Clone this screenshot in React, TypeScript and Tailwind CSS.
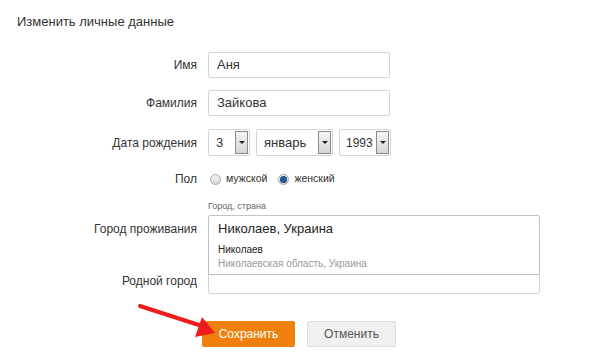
import type { FC, ReactNode } from "react";

const Row: FC<{ label: string; className?: string; children: ReactNode }> = ({ label, className, children }) => (
  <div className={"flex items-center " + (className ?? "")}>
    <div className="w-[198px] shrink-0 pr-[1px] text-right text-[12px] text-[#333]">{label}</div>
    <div className="ml-[10px] flex items-center">{children}</div>
  </div>
);

const Select: FC<{ value: string; width: string; text?: string; pad?: string }> = ({ value, width, text, pad }) => (
  <div className={"flex h-[27px] items-center justify-between rounded-[2px] border border-[#d4d4d4] bg-white pr-[1px] " + (pad ?? "pl-[7px] ") + " " + width}>
    <span className={(text ?? "text-[13px]") + " text-[#333]"}>{value}</span>
    <div className="flex h-[23px] w-[13px] shrink-0 items-center justify-center border border-[#8a8a8a] bg-gradient-to-b from-[#f4f4f4] to-[#d6d6d6]">
      <div className="h-0 w-0 border-x-[3px] border-t-[3px] border-x-transparent border-t-[#222]" />
    </div>
  </div>
);

const Radio: FC<{ checked?: boolean; label: string }> = ({ checked, label }) => (
  <div className="flex items-center gap-[5px]">
    <div className="flex h-[11px] w-[11px] items-center justify-center rounded-full border border-[#a8a8a8] bg-gradient-to-b from-[#f2f2f2] to-[#d8d8d8]">
      {checked && <div className="h-[5px] w-[5px] rounded-full bg-[#1e5fa8] ring-1 ring-[#24456e]" />}
    </div>
    <span className="text-[10.5px] text-[#333]">{label}</span>
  </div>
);

const App: FC = () => {
  return (
    <div className="relative h-[359px] w-[600px] overflow-hidden bg-white font-['Liberation_Sans',Arial,sans-serif]">
      <div className="pl-[17px] pt-[13px] text-[13px] leading-[18px] text-[#333]">Изменить личные данные</div>

      <div className="mt-[21px] flex flex-col">
        <Row label="Имя">
          <div className="flex h-[26px] w-[182px] items-center rounded-[2px] border border-[#d4d4d4] px-[8px] text-[13px] text-[#333]">Аня</div>
        </Row>
        <Row label="Фамилия" className="mt-[12px]">
          <div className="flex h-[26px] w-[182px] items-center rounded-[2px] border border-[#d4d4d4] px-[8px] text-[13px] text-[#333]">Зайкова</div>
        </Row>
        <Row label="Дата рождения" className="mt-[13px]">
          <div className="flex gap-[6px]">
            <Select value="3" width="w-[42px]" />
            <Select value="январь" width="w-[77px]" />
            <Select value="1993" width="w-[52px]" text="text-[12px]" pad="pl-[6px]" />
          </div>
        </Row>
        <Row label="Пол" className="mt-[14px]">
          <div className="flex gap-[11px] pl-[2px]">
            <Radio label="мужской" />
            <Radio checked label="женский" />
          </div>
        </Row>

        <div className="ml-[208px] mt-[12px] text-[9px] leading-[12px] text-[#666]">Город, страна</div>
        <div className="relative">
          <Row label="Город проживания" className="mt-[3px]">
            <div className="flex h-[28px] w-[332px] items-center rounded-[2px] border border-[#c4c4c4] px-[9px] text-[13px] text-[#222]">
              Николаев, Украина
            </div>
          </Row>
          <Row label="Родной город" className="mt-[25px]">
            <div className="h-[26px] w-[332px] rounded-[2px] border border-[#d4d4d4]" />
          </Row>
          <div className="absolute left-[208px] top-[27px] w-[332px] border border-t-0 border-[#bdbdbd] bg-white px-[9px] pb-[3px] pt-[4px]">
            <div className="text-[10px] leading-[14px] text-[#222]">Николаев</div>
            <div className="text-[10px] leading-[14px] text-[#999]">Николаевская область, Украина</div>
          </div>
        </div>

        <div className="ml-[202px] mt-[27px] flex gap-[12px]">
          <div className="flex h-[26px] w-[93px] items-center justify-center rounded-[2px] bg-[#f07f0e] text-[12px] text-white">
            Сохранить
          </div>
          <div className="flex h-[26px] w-[89px] items-center justify-center rounded-[2px] border border-[#dcdcdc] bg-[#f0f0f0] text-[12px] text-[#555]">
            Отменить
          </div>
        </div>
      </div>

      <svg className="absolute left-0 top-0" width="600" height="359" viewBox="0 0 600 359">
        <line x1="140" y1="306" x2="202" y2="326" stroke="#ee1c1c" strokeWidth="4" strokeLinecap="round" />
        <polygon points="215,333 195,337 202,317" fill="#ee1c1c" />
      </svg>
    </div>
  );
};

export default App;
